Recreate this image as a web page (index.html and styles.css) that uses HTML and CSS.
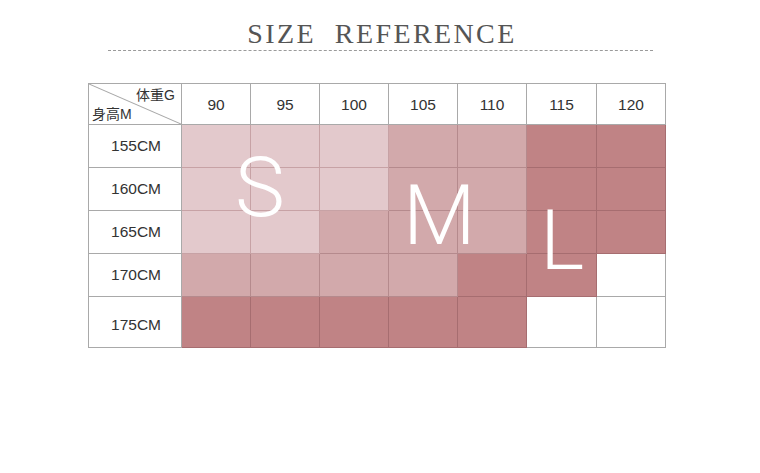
FILE: index.html
```html
<!DOCTYPE html>
<html>
<head>
<meta charset="utf-8">
<link rel="stylesheet" href="styles.css">
</head>
<body>
<div class="page">
  <h1 class="title">SIZE&nbsp; REFERENCE</h1>
  <div class="rule"></div>
  <div class="chart-wrap">
    <div class="chart">
      <div class="cell corner">
        <svg class="diag" viewBox="0 0 91 39" preserveAspectRatio="none"><line x1="0" y1="0" x2="91" y2="39" stroke="#a9a9a9" stroke-width="1"/></svg>
        <span class="c-top">体重G</span>
        <span class="c-bot">身高M</span>
      </div>
      <div class="cell head">90</div>
      <div class="cell head">95</div>
      <div class="cell head">100</div>
      <div class="cell head">105</div>
      <div class="cell head">110</div>
      <div class="cell head">115</div>
      <div class="cell head">120</div>

      <div class="cell label">155CM</div>
      <div class="cell s"></div><div class="cell s"></div><div class="cell s"></div>
      <div class="cell m"></div><div class="cell m"></div>
      <div class="cell l"></div><div class="cell l"></div>

      <div class="cell label">160CM</div>
      <div class="cell s"></div><div class="cell s"></div><div class="cell s"></div>
      <div class="cell m"></div><div class="cell m"></div>
      <div class="cell l"></div><div class="cell l"></div>

      <div class="cell label">165CM</div>
      <div class="cell s"></div><div class="cell s"></div>
      <div class="cell m"></div><div class="cell m"></div><div class="cell m"></div>
      <div class="cell l"></div><div class="cell l"></div>

      <div class="cell label">170CM</div>
      <div class="cell m"></div><div class="cell m"></div><div class="cell m"></div><div class="cell m"></div>
      <div class="cell l"></div><div class="cell l"></div>
      <div class="cell empty"></div>

      <div class="cell label tall">175CM</div>
      <div class="cell l"></div><div class="cell l"></div><div class="cell l"></div><div class="cell l"></div><div class="cell l"></div>
      <div class="cell empty"></div><div class="cell empty"></div>
    </div>
    <span class="big big-s">S</span>
    <span class="big big-m">M</span>
    <span class="big big-l">L</span>
  </div>
</div>
</body>
</html>
```

FILE: styles.css
```css
* { box-sizing: border-box; }
html, body { margin: 0; padding: 0; background: #fff; }
body { width: 760px; height: 473px; overflow: hidden; font-family: "Liberation Sans", Arial, "Noto Sans CJK SC", sans-serif; }
.page { padding-top: 18px; }
.title {
  margin: 0;
  text-align: center;
  font-family: "Liberation Serif", "Times New Roman", serif;
  font-weight: normal;
  font-size: 28px;
  line-height: 32px;
  letter-spacing: 2.4px;
  color: #555;
  padding-left: 4px;
}
.rule {
  margin: 0 0 0 108px;
  width: 545px;
  height: 0;
  border-top: 1px dashed #9a9a9a;
  margin-top: 0;
}
.chart-wrap {
  position: relative;
  margin: 32px 0 0 89px;
  width: 577px;
}
.chart {
  display: grid;
  grid-template-columns: 93px 69px 69px 69px 69px 69px 70px 69px;
  grid-template-rows: 41px 43px 43px 43px 43px 51px;
  border-top: 1px solid #a9a9a9;
  border-left: 1px solid #a9a9a9;
  margin-left: -1px;
}
.cell {
  border-right: 1px solid #a9a9a9;
  border-bottom: 1px solid #a9a9a9;
  display: flex;
  align-items: center;
  justify-content: center;
  font-size: 15.5px;
  color: #333;
}
.corner { position: relative; display: block; }
.diag { position: absolute; left: 0; top: 0; width: 100%; height: 100%; }
.c-top { position: absolute; right: 6px; top: 3px; font-size: 14px; line-height: 16px; color: #333; }
.c-bot { position: absolute; left: 3px; bottom: 2px; font-size: 14px; line-height: 16px; color: #333; }
.head { padding-top: 1px; font-size: 15.5px; }
.label { padding-left: 2px; }
.tall { padding-top: 6px; }
.s { background: #e3c9cc; border-color: #c7a2a5; }
.m { background: #d2a9ab; border-color: #b58a8d; }
.l { background: #c08385; border-color: #a66d70; }
.empty { background: #fff; }
.big {
  position: absolute;
  font-family: "Roboto", "Open Sans", sans-serif;
  font-weight: 300;
  font-size: 84px;
  line-height: 1;
  color: #fff;
}
.big-s { left: 146px; top: 63px; }
.big-m { left: 314px; top: 91px; }
.big-l { left: 451px; top: 116px; }
```
